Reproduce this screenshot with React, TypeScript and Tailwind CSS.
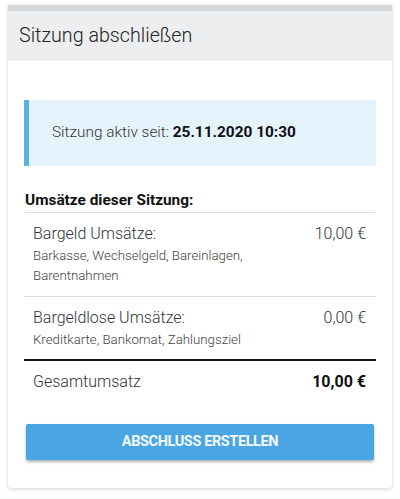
import React from 'react';

const rows = [
  { label: 'Bargeld Umsätze:', hint: 'Barkasse, Wechselgeld, Bareinlagen, Barentnahmen', amount: '10,00 €' },
  { label: 'Bargeldlose Umsätze:', hint: 'Kreditkarte, Bankomat, Zahlungsziel', amount: '0,00 €' },
];

export default function App() {
  return (
    <div className="min-h-[499px] bg-white px-2 pt-[5px] pb-[11px]" style={{ fontFamily: 'Roboto, "Liberation Sans", sans-serif' }}>
      <div className="bg-white rounded-b shadow-[0_1px_4px_rgba(0,0,0,0.18)] border-t-[6px] border-[#d3d7da]">
        <div className="bg-[#eceef0] h-[50px] flex items-center px-[11px]">
          <h2 className="text-[19.7px] font-light text-[#222]">Sitzung abschließen</h2>
        </div>

        <div className="px-4 pt-[39px] pb-[28px]">
          <div className="bg-[#e4f3fc] border-l-[5px] border-[#5ab4e2] h-[66px] flex items-center pl-[23px]">
            <span className="text-[15.4px] text-[#333] font-light">
              Sitzung aktiv seit: <span className="font-bold text-[#111]">25.11.2020 10:30</span>
            </span>
          </div>

          <div className="mt-[24px] text-[15.4px] font-bold text-[#111] leading-[20px] pb-[2px] border-b border-[#ddd] mx-[1px]">
            Umsätze dieser Sitzung:
          </div>

          {rows.map((r, i) => (
            <div key={r.label} className={'flex justify-between pl-[9px] pr-[10px] pt-[11px] ' + (i === 0 ? 'pb-[10px] border-b border-[#ddd]' : 'pb-[9px] border-b-2 border-[#111]')}>
              <div className="w-[230px]">
                <div className="text-[16px] font-light text-[#333] leading-[20px]">{r.label}</div>
                <div className="text-[13.25px] text-[#444] font-light leading-[20px] mt-[2px]">{r.hint}</div>
              </div>
              <div className="text-[16px] font-light text-[#333] leading-[20px]">{r.amount}</div>
            </div>
          ))}

          <div className="flex justify-between pl-[9px] pr-[10px] pt-[11px]">
            <span className="text-[16px] font-light text-[#333] leading-[20px]">Gesamtumsatz</span>
            <span className="text-[16px] font-bold text-[#111] leading-[20px]">10,00 €</span>
          </div>

          <button className="mt-[32px] ml-[2px] w-[348px] h-[36px] bg-[#4aa6e2] rounded-[2px] shadow-[0_2px_3px_rgba(0,0,0,0.3)] text-[#f4f9fd] text-[14.5px] font-bold tracking-[-0.4px]">
            ABSCHLUSS ERSTELLEN
          </button>
        </div>
      </div>
    </div>
  );
}
